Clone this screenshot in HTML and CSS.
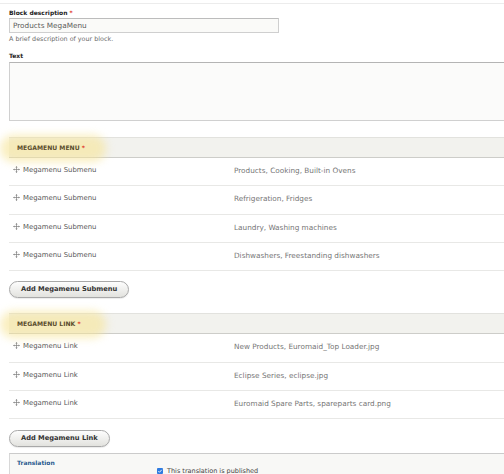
FILE: index.html
```html
<!DOCTYPE html>
<html>
<head>
<meta charset="utf-8">
<link rel="stylesheet" href="styles.css">
</head>
<body>
<div class="topline"></div>
<div class="form">
  <div class="label">Block description <span class="req">*</span></div>
  <input class="text-input" type="text" value="Products MegaMenu">
  <div class="desc">A brief description of your block.</div>
  <div class="label label-text">Text</div>
  <textarea class="textarea"></textarea>

  <table class="dtable">
    <colgroup><col class="col1"><col></colgroup>
    <thead><tr><th colspan="2">MEGAMENU MENU <span class="req">*</span></th></tr></thead>
    <tbody>
      <tr><td class="c1"><svg class="handle" viewBox="0 0 10 10"><path d="M5 1.2V8.8M1.2 5H8.8" stroke="#808080" stroke-width="1"/><path d="M5 0L3.4 2.1H6.6ZM5 10L3.4 7.9H6.6ZM0 5L2.1 3.4V6.6ZM10 5L7.9 3.4V6.6Z" fill="#808080"/></svg>Megamenu Submenu</td><td class="c2">Products, Cooking, Built-in Ovens</td></tr>
      <tr><td class="c1"><svg class="handle" viewBox="0 0 10 10"><path d="M5 1.2V8.8M1.2 5H8.8" stroke="#808080" stroke-width="1"/><path d="M5 0L3.4 2.1H6.6ZM5 10L3.4 7.9H6.6ZM0 5L2.1 3.4V6.6ZM10 5L7.9 3.4V6.6Z" fill="#808080"/></svg>Megamenu Submenu</td><td class="c2">Refrigeration, Fridges</td></tr>
      <tr><td class="c1"><svg class="handle" viewBox="0 0 10 10"><path d="M5 1.2V8.8M1.2 5H8.8" stroke="#808080" stroke-width="1"/><path d="M5 0L3.4 2.1H6.6ZM5 10L3.4 7.9H6.6ZM0 5L2.1 3.4V6.6ZM10 5L7.9 3.4V6.6Z" fill="#808080"/></svg>Megamenu Submenu</td><td class="c2">Laundry, Washing machines</td></tr>
      <tr><td class="c1"><svg class="handle" viewBox="0 0 10 10"><path d="M5 1.2V8.8M1.2 5H8.8" stroke="#808080" stroke-width="1"/><path d="M5 0L3.4 2.1H6.6ZM5 10L3.4 7.9H6.6ZM0 5L2.1 3.4V6.6ZM10 5L7.9 3.4V6.6Z" fill="#808080"/></svg>Megamenu Submenu</td><td class="c2">Dishwashers, Freestanding dishwashers</td></tr>
    </tbody>
  </table>
  <button class="btn" type="button">Add Megamenu Submenu</button>

  <table class="dtable dtable-2">
    <colgroup><col class="col1"><col></colgroup>
    <thead><tr><th colspan="2">MEGAMENU LINK <span class="req">*</span></th></tr></thead>
    <tbody>
      <tr><td class="c1"><svg class="handle" viewBox="0 0 10 10"><path d="M5 1.2V8.8M1.2 5H8.8" stroke="#808080" stroke-width="1"/><path d="M5 0L3.4 2.1H6.6ZM5 10L3.4 7.9H6.6ZM0 5L2.1 3.4V6.6ZM10 5L7.9 3.4V6.6Z" fill="#808080"/></svg>Megamenu Link</td><td class="c2">New Products, Euromaid_Top Loader.jpg</td></tr>
      <tr><td class="c1"><svg class="handle" viewBox="0 0 10 10"><path d="M5 1.2V8.8M1.2 5H8.8" stroke="#808080" stroke-width="1"/><path d="M5 0L3.4 2.1H6.6ZM5 10L3.4 7.9H6.6ZM0 5L2.1 3.4V6.6ZM10 5L7.9 3.4V6.6Z" fill="#808080"/></svg>Megamenu Link</td><td class="c2">Eclipse Series, eclipse.jpg</td></tr>
      <tr><td class="c1"><svg class="handle" viewBox="0 0 10 10"><path d="M5 1.2V8.8M1.2 5H8.8" stroke="#808080" stroke-width="1"/><path d="M5 0L3.4 2.1H6.6ZM5 10L3.4 7.9H6.6ZM0 5L2.1 3.4V6.6ZM10 5L7.9 3.4V6.6Z" fill="#808080"/></svg>Megamenu Link</td><td class="c2">Euromaid Spare Parts, spareparts card.png</td></tr>
    </tbody>
  </table>
  <button class="btn btn-2" type="button">Add Megamenu Link</button>

  <div class="translation">
    <div class="summary">Translation</div>
    <div class="pub">
      <svg class="check" viewBox="0 0 8 8"><rect x="0" y="0" width="8" height="8" rx="1.2" fill="#2f7be0"/><path d="M1.8 4.2L3.3 5.7L6.3 2.4" stroke="#fff" stroke-width="1.2" fill="none"/></svg>
      <span>This translation is published</span>
    </div>
  </div>
</div>
</body>
</html>
```

FILE: styles.css
```css
html, body {
  margin: 0;
  overflow: hidden;
}
body {
  font-family: "DejaVu Sans", Verdana, sans-serif;
  color: #333;
  background: #fff;
  -webkit-font-smoothing: antialiased;
}
.topline {
  height: 3px;
  border-bottom: 1px solid #ececec;
}
.form {
  width: 600px;
  padding-left: 9px;
  display: flex;
  flex-direction: column;
  align-items: flex-start;
}
.label {
  margin-top: 5px;
  font-size: 6px;
  font-weight: bold;
  line-height: 7px;
  color: #222;
}
.label-text {
  margin-top: 9px;
}
.req {
  color: #e0301e;
}
.text-input {
  margin: 2px 0 0 0;
  width: 270px;
  height: 15px;
  box-sizing: border-box;
  border: 1px solid #cfcfcf;
  border-top-color: #bcbcbc;
  background: #fafaf8;
  font-family: "DejaVu Sans", Verdana, sans-serif;
  font-size: 7.3px;
  color: #5a5a5a;
  padding: 0 3px;
  outline: none;
}
.desc {
  margin-top: 3px;
  font-size: 6.4px;
  line-height: 7px;
  color: #6a6a6a;
}
.textarea {
  display: block;
  margin: 3px 0 0 0;
  width: 591px;
  height: 59px;
  box-sizing: border-box;
  border: 1px solid #d0d0d0;
  border-top-color: #b4b4b4;
  background: #fbfbfa;
  resize: none;
  padding: 0;
}
.dtable {
  margin-top: 16px;
  width: 591px;
  border-collapse: collapse;
  table-layout: fixed;
}
.dtable-2 {
  margin-top: 15px;
}
.col1 {
  width: 217px;
}
.dtable th {
  position: relative;
  z-index: 0;
  text-align: left;
  padding: 6px 8px;
  line-height: 7px;
  font-size: 6.1px;
  font-weight: bold;
  color: #5a4d2c;
  background: #f2f2ee;
  border-top: 1px solid #e2e2de;
  border-bottom: 1px solid #cdcdc9;
}
.dtable th::before {
  content: "";
  position: absolute;
  left: -9px;
  top: -3px;
  width: 106px;
  height: 27px;
  border-radius: 14px;
  background: rgba(246, 228, 150, 0.6);
  filter: blur(4px);
  z-index: -1;
}
.dtable td {
  padding: 8px 0 10.33px 8px;
  line-height: 9px;
  font-size: 6.9px;
  border-bottom: 1px solid #e8e8e6;
  white-space: nowrap;
}
.dtable td.c1 {
  padding-left: 4px;
  color: #585858;
}
.dtable td.c2 {
  font-size: 7.3px;
  color: #767676;
}
.handle {
  width: 7px;
  height: 7px;
  margin-right: 3px;
  vertical-align: -1px;
}
.btn {
  margin-top: 10px;
  height: 17px;
  padding: 0 11px;
  border: 1px solid #a8a8a8;
  border-radius: 9px;
  background: linear-gradient(#fdfdfd, #e2e2de);
  box-shadow: 0 1px 1px rgba(0, 0, 0, 0.08);
  font-family: "DejaVu Sans", Verdana, sans-serif;
  font-size: 6.7px;
  font-weight: bold;
  color: #333;
  line-height: 15px;
}
.btn-2 {
  margin-top: 11px;
}
.translation {
  margin-top: 6px;
  width: 591px;
  box-sizing: border-box;
  border-top: 1px solid #cbcbcb;
  border-left: 1px solid #d8d8d8;
  background: #f8f8f6;
  padding: 5px 7px;
  display: flex;
  align-items: flex-start;
}
.summary {
  width: 140px;
  font-size: 6px;
  font-weight: bold;
  line-height: 8px;
  color: #285a8f;
}
.pub {
  margin-top: 8px;
  display: flex;
  align-items: center;
  gap: 4px;
  font-size: 6.5px;
  line-height: 8px;
  color: #444;
}
.check {
  width: 6px;
  height: 6px;
}
```
